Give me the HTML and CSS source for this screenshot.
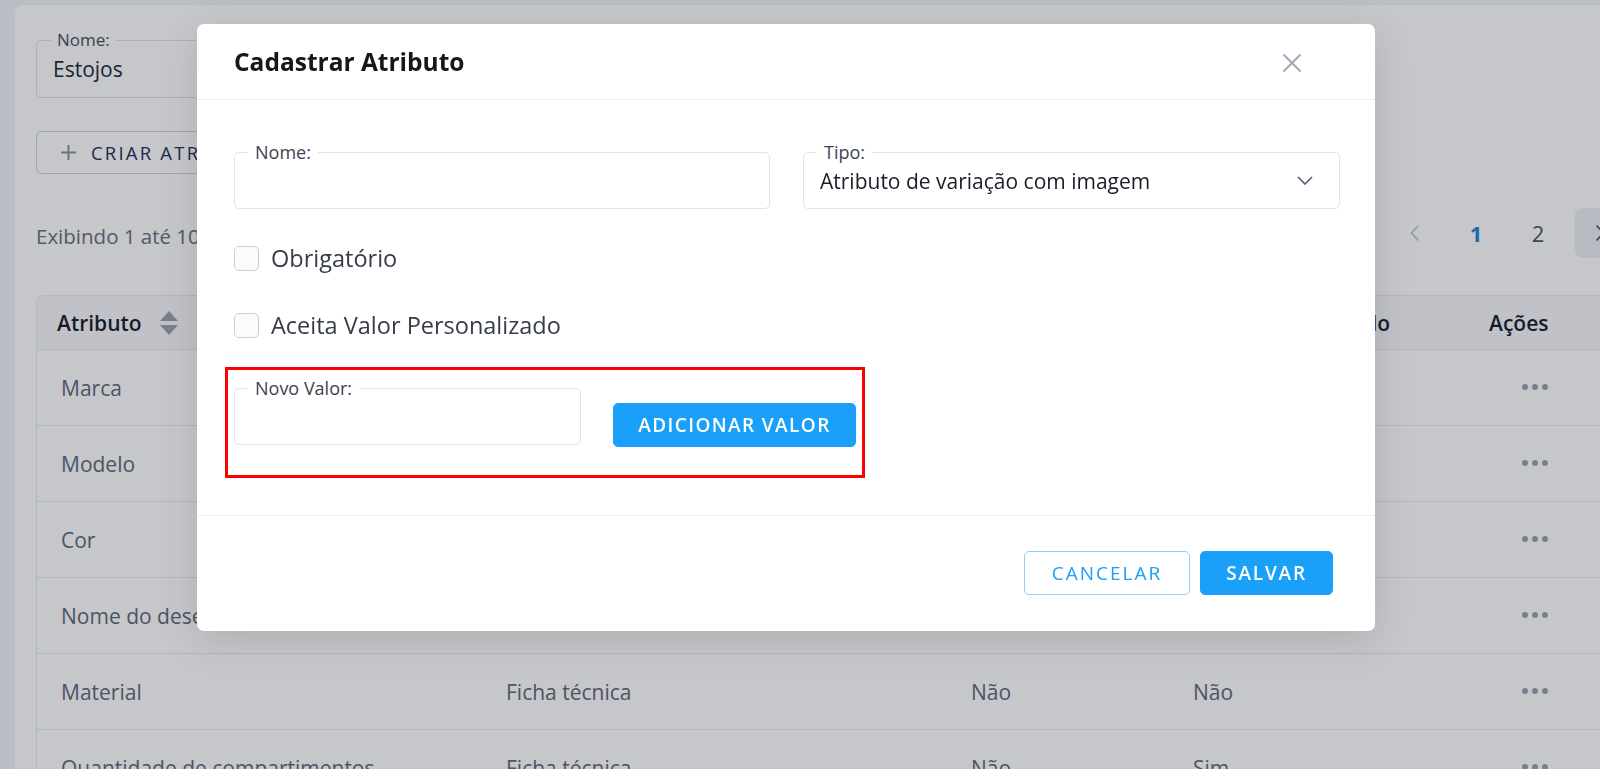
FILE: index.html
```html
<!DOCTYPE html>
<html lang="pt-BR">
<head>
    <meta charset="UTF-8">
    <meta name="viewport" content="width=device-width, initial-scale=1.0">
    <title>Atributos - Estojos</title>
    <link rel="stylesheet" href="styles.css">
</head>
<body>
    <div class="page">
        <div class="card">
            <div class="bg-field">
                <span class="bg-label">Nome:</span>
                <span class="bg-value">Estojos</span>
            </div>

            <button class="btn-create">
                <svg width="17" height="17" viewBox="0 0 17 17"><path d="M8.5 1v15M1 8.5h15" stroke="#8a909c" stroke-width="2" fill="none"/></svg>
                CRIAR ATRIBUTO
            </button>

            <div class="toolbar">
                <span class="count">Exibindo 1 até 10 de 12 registros</span>
                <div class="pager">
                    <span class="pg pg-arrow">
                        <svg width="10" height="18" viewBox="0 0 10 18"><path d="M8.5 1.5L1.5 9l7 7.5" stroke="#b9bec7" stroke-width="1.6" fill="none"/></svg>
                    </span>
                    <span class="pg pg-active">1</span>
                    <span class="pg">2</span>
                    <span class="pg pg-next">
                        <svg width="10" height="18" viewBox="0 0 10 18"><path d="M1.5 1.5L8.5 9l-7 7.5" stroke="#4b5262" stroke-width="1.6" fill="none"/></svg>
                    </span>
                </div>
            </div>

            <table class="table">
                <thead>
                    <tr>
                        <th class="c1">Atributo
                            <svg class="sort" width="20" height="26" viewBox="0 0 20 26"><path d="M10 1l9 10H1z M10 25L1 15h18z" fill="#9aa0aa"/></svg>
                        </th>
                        <th class="c2">Tipo</th>
                        <th class="c3">Obrigatório</th>
                        <th class="c4">Valor personalizado</th>
                        <th class="c5">Ações</th>
                    </tr>
                </thead>
                <tbody>
                    <tr><td>Marca</td><td>Ficha técnica</td><td>Não</td><td>Não</td><td><span class="dots"><i></i><i></i><i></i></span></td></tr>
                    <tr><td>Modelo</td><td>Ficha técnica</td><td>Não</td><td>Não</td><td><span class="dots"><i></i><i></i><i></i></span></td></tr>
                    <tr><td>Cor</td><td>Atributo de variação</td><td>Sim</td><td>Não</td><td><span class="dots"><i></i><i></i><i></i></span></td></tr>
                    <tr><td>Nome do desenho</td><td>Ficha técnica</td><td>Não</td><td>Sim</td><td><span class="dots"><i></i><i></i><i></i></span></td></tr>
                    <tr><td>Material</td><td>Ficha técnica</td><td>Não</td><td>Não</td><td><span class="dots"><i></i><i></i><i></i></span></td></tr>
                    <tr><td>Quantidade de compartimentos</td><td>Ficha técnica</td><td>Não</td><td>Sim</td><td><span class="dots"><i></i><i></i><i></i></span></td></tr>
                </tbody>
            </table>
        </div>
    </div>

    <div class="overlay"></div>

    <div class="modal">
        <div class="modal-header">
            <h2>Cadastrar Atributo</h2>
            <button class="close">
                <svg width="20" height="20" viewBox="0 0 20 20"><path d="M1.5 1.5l17 17M18.5 1.5l-17 17" stroke="#a3a7b6" stroke-width="2" fill="none"/></svg>
            </button>
        </div>

        <div class="modal-body">
            <div class="grid">
                <div class="field">
                    <span class="field-label">Nome:</span>
                    <input class="field-input" type="text">
                </div>
                <div class="field field-select">
                    <span class="field-label">Tipo:</span>
                    <span class="select-value">Atributo de variação com imagem</span>
                    <svg width="16" height="9" viewBox="0 0 16 9"><path d="M1 1l7 7 7-7" stroke="#5b6178" stroke-width="1.7" fill="none"/></svg>
                </div>
            </div>

            <label class="check check-first"><span class="box"></span>Obrigatório</label>
            <label class="check"><span class="box"></span>Aceita Valor Personalizado</label>

            <div class="highlight">
                <div class="field field-small">
                    <span class="field-label">Novo Valor:</span>
                    <input class="field-input" type="text">
                </div>
                <button class="btn btn-primary btn-add">ADICIONAR VALOR</button>
            </div>
        </div>

        <div class="modal-footer">
            <button class="btn btn-outline">CANCELAR</button>
            <button class="btn btn-primary btn-save">SALVAR</button>
        </div>
    </div>
</body>
</html>
```

FILE: styles.css
```css
* { margin: 0; padding: 0; box-sizing: border-box; }
html, body { height: 100%; overflow: hidden; }
body {
    font-family: "Open Sans", "Noto Sans", sans-serif;
    background: #f0f2f5;
    color: #1f2430;
}

/* pagina de fundo */
.page {
    padding: 5px 0 0 15px;
}
.card {
    background: #fff;
    border-radius: 8px 0 0 0;
    padding: 35px 0 0 21px;
    min-height: 800px;
}
.bg-field {
    position: relative;
    width: 520px;
    height: 58px;
    border: 1px solid #dfe2e7;
    border-radius: 5px;
    padding: 14px 0 0 16px;
}
.bg-label {
    position: absolute;
    top: -12px;
    left: 14px;
    padding: 0 6px;
    background: #fff;
    font-size: 17px;
    line-height: 22px;
    color: #454b58;
}
.bg-value {
    font-size: 21px;
    color: #1c2130;
}
.btn-create {
    display: flex;
    align-items: center;
    gap: 14px;
    margin-top: 33px;
    height: 43px;
    width: 280px;
    padding: 0 23px;
    background: #fff;
    border: 1px solid #cdd1d8;
    border-radius: 6px;
    font-family: inherit;
    font-size: 18.5px;
    letter-spacing: 2.2px;
    color: #1b2850;
}
.toolbar {
    display: flex;
    align-items: center;
    justify-content: space-between;
    margin-top: 34px;
    height: 50px;
}
.count {
    font-size: 20.5px;
    color: #666d7c;
    padding-top: 6px;
}
.pager {
    display: flex;
    align-items: center;
    margin-right: -25px;
}
.pg {
    width: 62px;
    height: 50px;
    display: flex;
    align-items: center;
    justify-content: center;
    font-size: 22px;
    color: #4b5262;
}
.pg-arrow { width: 60px; }
.pg-active { color: #1782d8; font-weight: 700; }
.pg-next {
    width: 50px;
    margin-left: 6px;
    background: #eceef2;
    border-radius: 8px;
}

.table {
    margin-top: 37px;
    width: 1580px;
    border-collapse: separate;
    border-spacing: 0;
    border: 1px solid #e6e8ec;
    border-radius: 8px 0 0 0;
    font-size: 21px;
}
.table th {
    height: 54px;
    text-align: left;
    font-weight: 600;
    color: #141927;
    background: #f8f9fb;
    border-bottom: 1px solid #e6e8ec;
    padding-left: 20px;
}
.table th .sort {
    vertical-align: middle;
    margin-left: 12px;
    margin-top: -3px;
}
.table td {
    height: 76px;
    padding-left: 24px;
    color: #5d6473;
    border-bottom: 1px solid #e6e8ec;
}
.c1 { width: 445px; }
.c2 { width: 465px; }
.c3 { width: 222px; }
.c4 { width: 300px; }
.dots {
    display: inline-flex;
    vertical-align: middle;
    gap: 4px;
    margin: -6px 0 0 29px;
}
.dots i {
    width: 6px;
    height: 6px;
    border-radius: 50%;
    background: #98a0ae;
}

.overlay {
    position: fixed;
    inset: 0;
    background: rgba(30, 40, 55, 0.26);
}

/* modal */
.modal {
    position: absolute;
    left: 197px;
    top: 24px;
    width: 1178px;
    background: #fff;
    border-radius: 7px;
    box-shadow: 0 10px 40px rgba(0, 0, 0, 0.12);
}
.modal-header {
    height: 76px;
    display: flex;
    align-items: center;
    justify-content: space-between;
    padding: 0 73px 0 37px;
    border-bottom: 1px solid #eceef1;
}
.modal-header h2 {
    font-size: 24.5px;
    font-weight: 700;
    color: #15171c;
}
.close {
    background: none;
    border: none;
    display: flex;
    margin-top: 2px;
}
.modal-body {
    padding: 52px 35px 37px 37px;
}
.grid {
    display: grid;
    grid-template-columns: 536px 537px;
    gap: 33px;
}
.field {
    position: relative;
    height: 57px;
    border: 1px solid #e1e4e8;
    border-radius: 5px;
    display: flex;
    align-items: center;
}
.field-label {
    position: absolute;
    top: -13px;
    left: 13px;
    padding: 0 7px;
    background: #fff;
    font-size: 18px;
    line-height: 24px;
    color: #3d4352;
}
.field-input {
    width: 100%;
    height: 100%;
    border: none;
    outline: none;
    background: transparent;
    font-family: inherit;
    font-size: 20px;
    padding: 0 17px;
}
.field-select {
    justify-content: space-between;
    padding: 0 26px 0 16px;
}
.select-value {
    font-size: 21px;
    color: #1a1d26;
}
.check {
    display: flex;
    align-items: center;
    gap: 12px;
    height: 34px;
    margin-top: 33px;
    font-size: 23.5px;
    color: #363c4a;
}
.check-first { margin-top: 32px; }
.box {
    width: 25px;
    height: 25px;
    border: 1px solid #c9cdd4;
    border-radius: 5px;
    background: #fbfbfc;
}
.highlight {
    display: flex;
    align-items: flex-end;
    gap: 32px;
    width: fit-content;
    margin: 25px 0 0 -9px;
    padding: 18px 6px 30px 6px;
    border: 3px solid #ff0000;
}
.field-small { width: 347px; }
.btn {
    height: 44px;
    border-radius: 5px;
    font-family: inherit;
    font-size: 19px;
    cursor: pointer;
}
.btn-primary {
    background: #1aa0f8;
    border: 1px solid #1aa0f8;
    color: #fff;
    font-weight: 600;
}
.btn-add {
    width: 243px;
    letter-spacing: 1.4px;
    margin-bottom: -2px;
}
.modal-footer {
    display: flex;
    justify-content: flex-end;
    gap: 10px;
    padding: 35px 42px 36px;
    border-top: 1px solid #eef0f2;
}
.btn-outline {
    width: 166px;
    background: #fff;
    border: 1px solid #8fd0fa;
    color: #1aa0f8;
    font-weight: 400;
    letter-spacing: 2px;
}
.btn-save {
    width: 133px;
    letter-spacing: 1.8px;
}
```
